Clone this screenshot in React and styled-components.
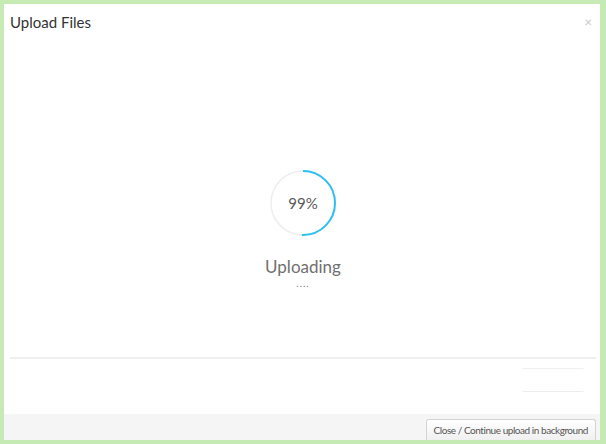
import React from "react";
import styled, { createGlobalStyle } from "styled-components";

const GlobalStyle = createGlobalStyle`
  html, body {
    margin: 0;
    padding: 0;
    background: #c6eab3;
  }
  body {
    font-family: Lato, "Open Sans", sans-serif;
  }
`;

const Frame = styled.div`
  width: 606px;
  height: 444px;
  box-sizing: border-box;
  padding: 4px 6px 4px 4px;
  background: #c6eab3;
`;

const Dialog = styled.div`
  height: 100%;
  display: flex;
  flex-direction: column;
  background: #fff;
`;

const Header = styled.div`
  height: 36px;
  display: flex;
  align-items: center;
  justify-content: space-between;
  padding: 0 8px 0 6px;
`;

const Title = styled.div`
  font-size: 15px;
  color: #333;
`;

const CloseX = styled.span`
  font-size: 13px;
  color: #c8c8c8;
  line-height: 1;
`;

const Body = styled.div`
  flex: 1;
  display: flex;
  flex-direction: column;
  align-items: center;
  padding-top: 129px;
  padding-left: 2px;
`;

const Ring = styled.div`
  position: relative;
  width: 68px;
  height: 68px;
`;

const Percent = styled.div`
  position: absolute;
  inset: 0;
  display: flex;
  align-items: center;
  justify-content: center;
  font-size: 15px;
  color: #5a5a5a;
`;

const Status = styled.div`
  margin-top: 19px;
  font-size: 17px;
  line-height: 22px;
  color: #707070;
`;

const Dots = styled.div`
  margin-top: 1px;
  font-size: 10px;
  color: #777;
  letter-spacing: 1px;
  line-height: 8px;
`;

const Divider = styled.div`
  height: 2px;
  background: #efefef;
  margin: 0 4px 0 6px;
`;

const Extra = styled.div`
  height: 55px;
  display: flex;
  justify-content: flex-end;
  align-items: flex-start;
  padding: 9px 16px 0 0;
  box-sizing: border-box;
`;

const GhostBox = styled.div`
  width: 62px;
  height: 22px;
  border-top: 1px solid #f0f0f0;
  border-bottom: 1px solid #ececec;
  border-radius: 2px;
`;

const Footer = styled.div`
  height: 26px;
  background: #f5f5f5;
  display: flex;
  justify-content: flex-end;
  align-items: flex-end;
  padding-right: 4px;
`;

const Button = styled.button`
  height: 21px;
  padding: 0 7px;
  font-family: Lato, "Open Sans", sans-serif;
  font-size: 10px;
  letter-spacing: -0.45px;
  color: #555;
  background: linear-gradient(#ffffff, #f0f0f0);
  border: 1px solid #d4d4d4;
  border-bottom: none;
  border-radius: 3px 3px 0 0;
  cursor: pointer;
`;

function ProgressRing({ value }) {
  const r = 32;
  const c = 2 * Math.PI * r;
  const shown = 0.505;
  return (
    <Ring>
      <svg width="68" height="68" viewBox="0 0 68 68">
        <circle cx="34" cy="34" r={r} fill="none" stroke="#eeeeee" strokeWidth="1.5" />
        <circle
          cx="34"
          cy="34"
          r={r}
          fill="none"
          stroke="#2cc0ef"
          strokeWidth="2"
          strokeDasharray={`${c * shown} ${c}`}
          transform="rotate(-90 34 34)"
        />
      </svg>
      <Percent>{value}%</Percent>
    </Ring>
  );
}

export default function App() {
  return (
    <>
      <GlobalStyle />
      <Frame>
        <Dialog>
          <Header>
            <Title>Upload Files</Title>
            <CloseX>×</CloseX>
          </Header>
          <Body>
            <ProgressRing value={99} />
            <Status>Uploading</Status>
            <Dots>....</Dots>
          </Body>
          <Divider />
          <Extra>
            <GhostBox />
          </Extra>
          <Footer>
            <Button>Close / Continue upload in background</Button>
          </Footer>
        </Dialog>
      </Frame>
    </>
  );
}
